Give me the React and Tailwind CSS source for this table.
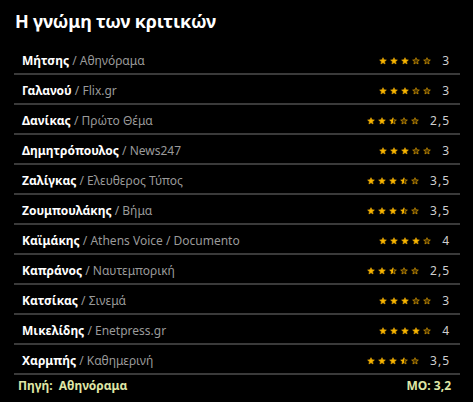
import React from 'react'

const REVIEWS = [
  { name: 'Μήτσης', outlet: 'Αθηνόραμα', score: 3 },
  { name: 'Γαλανού', outlet: 'Flix.gr', score: 3 },
  { name: 'Δανίκας', outlet: 'Πρώτο Θέμα', score: 2.5 },
  { name: 'Δημητρόπουλος', outlet: 'News247', score: 3 },
  { name: 'Ζαλίγκας', outlet: 'Ελευθερος Τύπος', score: 3.5 },
  { name: 'Ζουμπουλάκης', outlet: 'Βήμα', score: 3.5 },
  { name: 'Καϊμάκης', outlet: 'Athens Voice / Documento', score: 4 },
  { name: 'Καπράνος', outlet: 'Ναυτεμπορική', score: 2.5 },
  { name: 'Κατσίκας', outlet: 'Σινεμά', score: 3 },
  { name: 'Μικελίδης', outlet: 'Enetpress.gr', score: 4 },
  { name: 'Χαρμπής', outlet: 'Καθημερινή', score: 3.5 },
]

const STAR = 'M12 2l2.9 6.6 7.1.6-5.4 4.7 1.6 7-6.2-3.7-6.2 3.7 1.6-7L2 9.2l7.1-.6z'

function Star({ fill }) {
  // fill: 1 full, 0.5 half, 0 empty
  const id = 'half-clip'
  return (
    <svg viewBox="0 0 24 24" className="w-[8px] h-[8px]">
      <defs>
        <clipPath id={id}>
          <rect x="0" y="0" width="12" height="24" />
        </clipPath>
      </defs>
      <path d={STAR} fill={fill === 1 ? '#f7b500' : '#4a3300'} stroke="#e0a000" strokeWidth="2" strokeLinejoin="round" />
      {fill === 0.5 && <path d={STAR} fill="#f7b500" clipPath={`url(#${id})`} />}
    </svg>
  )
}

function Stars({ score }) {
  return (
    <div className="flex items-center gap-[3px]">
      {[1, 2, 3, 4, 5].map(i => (
        <Star key={i} fill={score >= i ? 1 : score >= i - 0.5 ? 0.5 : 0} />
      ))}
    </div>
  )
}

export default function App() {
  return (
    <div className="w-[473px] h-[402px] bg-black font-['Noto_Sans',sans-serif] overflow-hidden">
      <h2 className="h-[45px] px-[15px] pt-[7px] text-[18px] leading-[28px] font-bold text-white tracking-[-0.2px]">
        Η γνώμη των κριτικών
      </h2>
      <div className="mx-[14px] w-[446px]">
        {REVIEWS.map(r => (
          <div key={r.name} className="h-[30px] pt-[3px] flex items-center justify-between pl-[8px] pr-[10px] border-b-2 border-[#3a3a3a] text-[12px]">
            <div>
              <span className="font-bold text-white">{r.name}</span>
              <span className="text-[#9a9a9a]"> / {r.outlet}</span>
            </div>
            <div className="flex items-center gap-[11px]">
              <Stars score={r.score} />
              <span className="text-[#cfcfcf] tracking-[1px]">{String(r.score).replace('.', ',')}</span>
            </div>
          </div>
        ))}
      </div>
      <div className="h-[22px] flex items-center justify-between pl-[18px] pr-[22px] text-[12px] font-bold text-[#dfe6a6]">
        <span>Πηγή:&nbsp; Αθηνόραμα</span>
        <span>ΜΟ: 3,2</span>
      </div>
    </div>
  )
}
